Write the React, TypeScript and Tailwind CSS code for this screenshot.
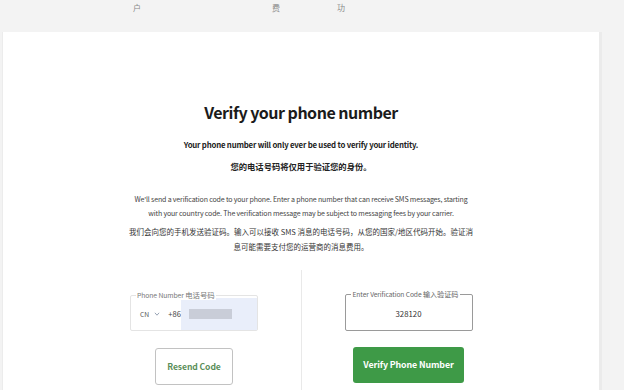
import React from 'react';

const font = { fontFamily: '"Noto Sans CJK SC", "Noto Sans", sans-serif' };

const App: React.FC = () => {
  return (
    <div className="flex h-[390px] flex-col overflow-hidden bg-[#f3f3f3]" style={font}>
      {/* top nav remnants */}
      <div className="flex h-[32px] shrink-0 pl-[133px] pt-[3px] text-[8px] leading-[10px] text-[#8a8a8a]">
        <span>户</span>
        <span className="ml-[131px]">费</span>
        <span className="ml-[57px]">功</span>
      </div>

      <div className="ml-[2px] flex w-[600px] flex-1 flex-col items-center border-l border-r-[3px] border-l-[#ececec] border-r-[#ebebeb] bg-white">
        <h1 className="mt-[68px] text-[16px] font-semibold leading-[24px] tracking-[-0.5px] text-[#1b1b1b]">
          Verify your phone number
        </h1>

        <p className="mt-[14px] text-[7.8px] font-bold leading-[13px] tracking-[-0.2px] text-[#222]">
          Your phone number will only ever be used to verify your identity.
        </p>
        <p className="mt-[9px] text-[8.3px] font-bold leading-[13px] text-[#222]">您的电话号码将仅用于验证您的身份。</p>

        <p className="mt-[19px] whitespace-nowrap text-center text-[7px] leading-[14px] tracking-[-0.15px] text-[#444]">
          We&apos;ll send a verification code to your phone. Enter a phone number that can receive SMS messages, starting
          <br />
          with your country code. The verification message may be subject to messaging fees by your carrier.
        </p>
        <p className="mt-[4px] whitespace-nowrap text-center text-[7.5px] leading-[15px] text-[#333]">
          我们会向您的手机发送验证码。输入可以接收 SMS 消息的电话号码，从您的国家/地区代码开始。验证消
          <br />
          息可能需要支付您的运营商的消息费用。
        </p>

        <div className="mt-[16px] flex flex-1 self-stretch justify-center">
          {/* phone column */}
          <div className="flex w-[214px] flex-col items-center pt-[25px]">
            <div className="relative h-[36px] w-[128px] rounded-[2px] border border-[#e4e4e4]">
              <span className="absolute -top-[6px] left-[5px] whitespace-nowrap bg-white px-[1px] text-[6.8px] leading-[10px] tracking-[-0.1px] text-[#777]">
                Phone Number <span className="text-[7.4px] tracking-normal">电话号码</span>
              </span>
              <div className="flex h-full items-stretch pt-[2px]">
                <div className="flex items-center pl-[9px] text-[6.8px] text-[#555]">
                  <span>CN</span>
                  <svg className="ml-[5px] h-[6px] w-[6px]" viewBox="0 0 10 10" fill="none" stroke="#7a8aa0" strokeWidth="1.3">
                    <path d="M1.5 3 L5 7 L8.5 3" />
                  </svg>
                  <span className="ml-[8px] text-[7.6px] text-[#444]">+86</span>
                </div>
                <div className="ml-auto flex w-[78px] items-center bg-[#e9eefa] pl-[8px]">
                  <div className="h-[10px] w-[43px] bg-[#c9cdd8]" />
                </div>
              </div>
            </div>
            <button className="mt-[17px] h-[37px] w-[78px] rounded-[3px] border border-[#c2c2c2] bg-white text-[8.6px] font-bold tracking-[-0.1px] text-[#5b8f5a]">
              Resend Code
            </button>
          </div>

          {/* code column */}
          <div className="flex w-[214px] flex-col items-center border-l border-[#e9e9e9] pt-[24px]">
            <div className="relative flex h-[37px] w-[128px] items-center justify-center rounded-[2px] border border-[#9a9a9a]">
              <span className="absolute -top-[6px] left-[5px] whitespace-nowrap bg-white px-[2px] text-[6.7px] leading-[10px] tracking-[-0.1px] text-[#666]">
                Enter Verification Code <span className="text-[7.1px] tracking-normal">输入验证码</span>
              </span>
              <span className="pt-[2px] text-[7.8px] text-[#333]">328120</span>
            </div>
            <button className="mt-[16px] h-[36px] w-[111px] whitespace-nowrap rounded-[3px] bg-[#3e9a47] text-[8.8px] font-bold tracking-[-0.1px] text-white">
              Verify Phone Number
            </button>
          </div>
        </div>
      </div>
    </div>
  );
};

export default App;
